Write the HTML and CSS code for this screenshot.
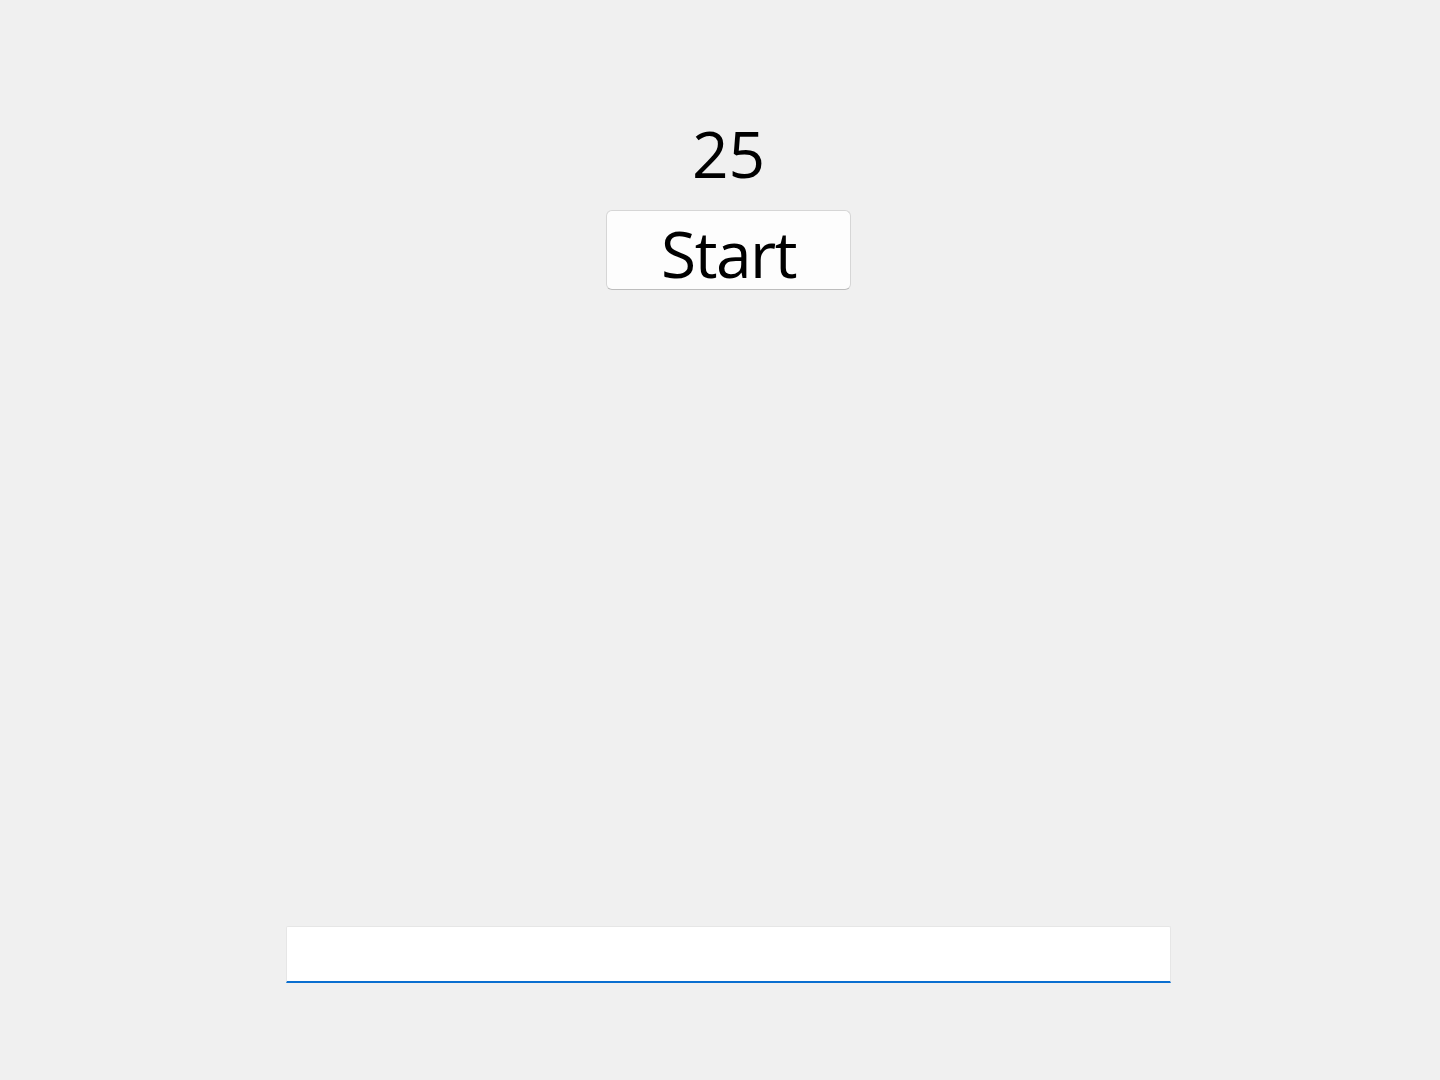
FILE: index.html
```html
<!DOCTYPE html>
<html lang="en">
<head>
<meta charset="utf-8">
<title>Timer</title>
<link rel="stylesheet" href="styles.css">
</head>
<body>
<main class="app">
  <div class="count">25</div>
  <button class="start" type="button">Start</button>
  <input class="entry" type="text" aria-label="entry">
</main>
</body>
</html>
```
FILE: styles.css
```css
html, body {
  margin: 0;
  padding: 0;
  background: #f0f0f0;
}
.app {
  width: 1440px;
  height: 1080px;
  box-sizing: border-box;
  padding-left: 17px;
  display: flex;
  flex-direction: column;
  align-items: center;
  font-family: "Open Sans", "Noto Sans", sans-serif;
  color: #000;
}
.count {
  margin-top: 122px;
  font-size: 64px;
  line-height: 64px;
  height: 64px;
  letter-spacing: 0;
}
.start {
  margin-top: 24px;
  width: 245px;
  height: 80px;
  box-sizing: border-box;
  padding: 11px 0 0;
  font-family: "Open Sans", "Noto Sans", sans-serif;
  font-size: 64px;
  line-height: 64px;
  letter-spacing: -1.5px;
  color: #000;
  background: #fdfdfd;
  border: 1px solid #d6d6d6;
  border-bottom-color: #bdbdbd;
  border-radius: 6px;
  display: flex;
  justify-content: center;
  align-items: flex-start;
}
.entry {
  margin-top: 636px;
  width: 885px;
  height: 57px;
  box-sizing: border-box;
  padding: 0 8px;
  background: #ffffff;
  border: 1px solid #e6e6e6;
  border-bottom: 2px solid #0a6fd0;
  border-radius: 2px 2px 0 0;
  outline: none;
  font-family: "Open Sans", "Noto Sans", sans-serif;
  font-size: 24px;
}
```
